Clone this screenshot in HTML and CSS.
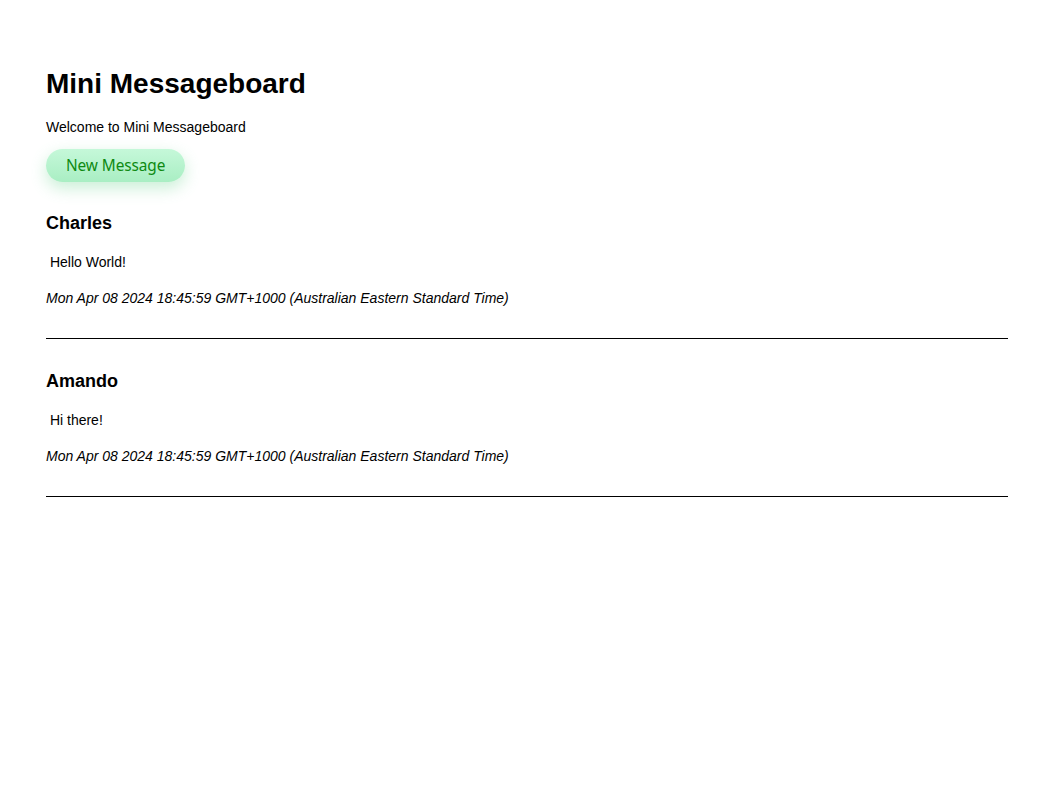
FILE: index.html
```html
<!DOCTYPE html>
<html lang="en">
<head>
<meta charset="utf-8">
<title>Mini Messageboard</title>
<link rel="stylesheet" href="styles.css">
</head>
<body>
<main class="page">
  <h1 class="title">Mini Messageboard</h1>
  <p class="intro">Welcome to Mini Messageboard</p>
  <a class="btn" href="#">New Message</a>
  <section class="messages">
    <article class="msg">
      <h2 class="msg-user">Charles</h2>
      <p class="msg-text">&nbsp;Hello World!</p>
      <p class="msg-date">Mon Apr 08 2024 18:45:59 GMT+1000 (Australian Eastern Standard Time)</p>
      <hr class="sep">
    </article>
    <article class="msg">
      <h2 class="msg-user">Amando</h2>
      <p class="msg-text">&nbsp;Hi there!</p>
      <p class="msg-date">Mon Apr 08 2024 18:45:59 GMT+1000 (Australian Eastern Standard Time)</p>
      <hr class="sep">
    </article>
  </section>
</main>
</body>
</html>
```

FILE: styles.css
```css
html, body {
  margin: 0;
  padding: 0;
  background: #fff;
}
body {
  font-family: "Liberation Sans", Arial, sans-serif;
  color: #000;
}
.page {
  padding: 68px 44px 0 46px;
}
.title {
  font-size: 28px;
  line-height: 32px;
  font-weight: 700;
  margin: 0 0 19px;
}
.intro {
  font-size: 14px;
  line-height: 16px;
  margin: 0 0 14px;
}
.btn {
  display: inline-flex;
  align-items: center;
  justify-content: center;
  height: 33px;
  padding: 0 20px;
  box-sizing: border-box;
  border-radius: 17px;
  background: linear-gradient(#c5f8d9, #a9eec3);
  box-shadow: 0 6px 16px rgba(90, 205, 130, 0.33);
  color: #0e8a12;
  font-family: "Noto Sans", sans-serif;
  font-size: 15.4px;
  letter-spacing: -0.1px;
  text-decoration: none;
  margin-bottom: 31px;
}
.messages {
  display: flex;
  flex-direction: column;
  gap: 32px;
}
.msg-user {
  font-size: 18px;
  line-height: 21px;
  font-weight: 700;
  margin: 0 0 20px;
}
.msg-text {
  font-size: 14px;
  line-height: 16px;
  margin: 0 0 20px;
}
.msg-date {
  font-size: 14px;
  line-height: 16px;
  font-style: italic;
  margin: 0 0 32px;
}
.sep {
  height: 0;
  border: 0;
  border-top: 1px solid #000;
  margin: 0;
}
```
